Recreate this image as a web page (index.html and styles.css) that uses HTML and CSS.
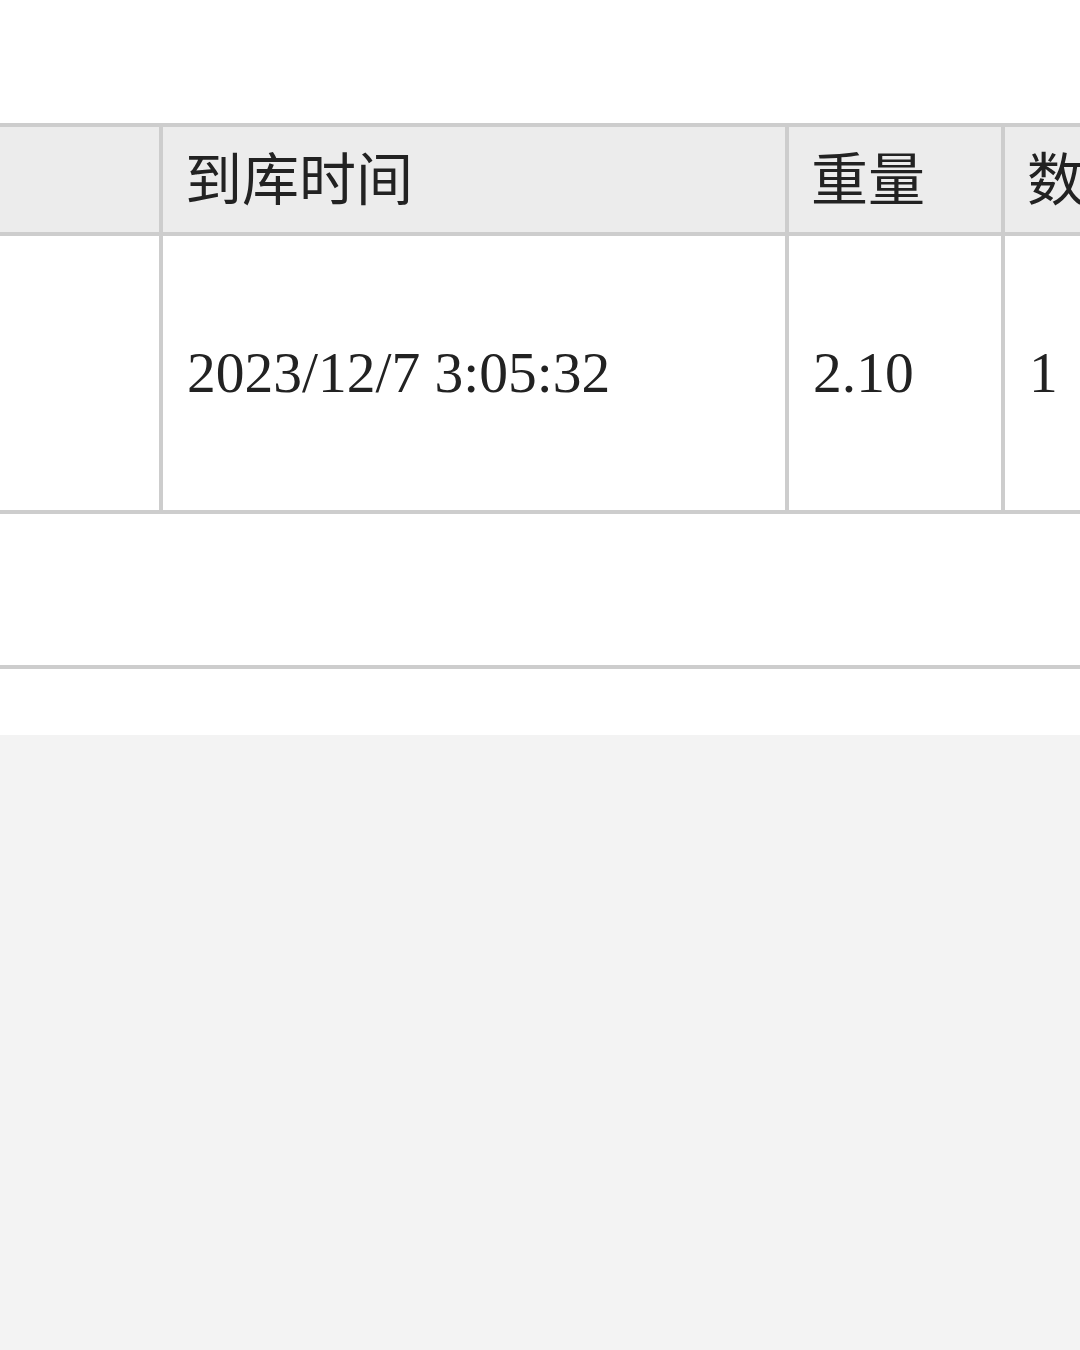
FILE: index.html
```html
<!DOCTYPE html>
<html lang="zh-CN">
<head>
<meta charset="utf-8">
<title>到库时间</title>
<link rel="stylesheet" href="styles.css">
</head>
<body>
<div class="page">
  <div class="table-wrap">
    <div class="table">
      <div class="cell head c1"></div>
      <div class="cell head c2">到库时间</div>
      <div class="cell head c3">重量</div>
      <div class="cell head c4">数量</div>
      <div class="cell body c1"></div>
      <div class="cell body c2">2023/12/7 3:05:32</div>
      <div class="cell body c3">2.10</div>
      <div class="cell body c4">1</div>
    </div>
  </div>
  <div class="footer-gap"></div>
  <div class="after-gap"></div>
  <div class="gray-area"></div>
</div>
</body>
</html>
```
FILE: styles.css
```css
html, body {
  margin: 0;
  padding: 0;
  background: #ffffff;
}

.page {
  width: 1080px;
  height: 1350px;
  display: flex;
  flex-direction: column;
  padding-top: 123px;
  box-sizing: border-box;
  overflow: hidden;
}

.table-wrap {
  width: 1080px;
  overflow: hidden;
}

.table {
  display: grid;
  grid-template-columns: 163px 626px 216px 240px;
  grid-template-rows: 113px 278px;
  width: 1245px;
}

.cell {
  box-sizing: border-box;
  border-right: 4px solid #cdcdcd;
  border-bottom: 4px solid #cdcdcd;
  padding-left: 24px;
  display: flex;
  align-items: center;
  color: #222222;
  white-space: nowrap;
  overflow: hidden;
}

.head {
  background: #ececec;
  border-top: 4px solid #cdcdcd;
  font-family: "Noto Sans CJK SC", "Noto Sans", sans-serif;
  font-size: 57px;
  padding-left: 22px;
  padding-bottom: 10px;
}

.body {
  background: #ffffff;
  font-family: "Liberation Serif", serif;
  font-size: 57.5px;
  padding-bottom: 2px;
}

.footer-gap {
  height: 151px;
  border-bottom: 4px solid #cdcdcd;
  flex: none;
}

.after-gap {
  height: 66px;
  flex: none;
}

.gray-area {
  flex: 1;
  background: #f3f3f3;
}
```
